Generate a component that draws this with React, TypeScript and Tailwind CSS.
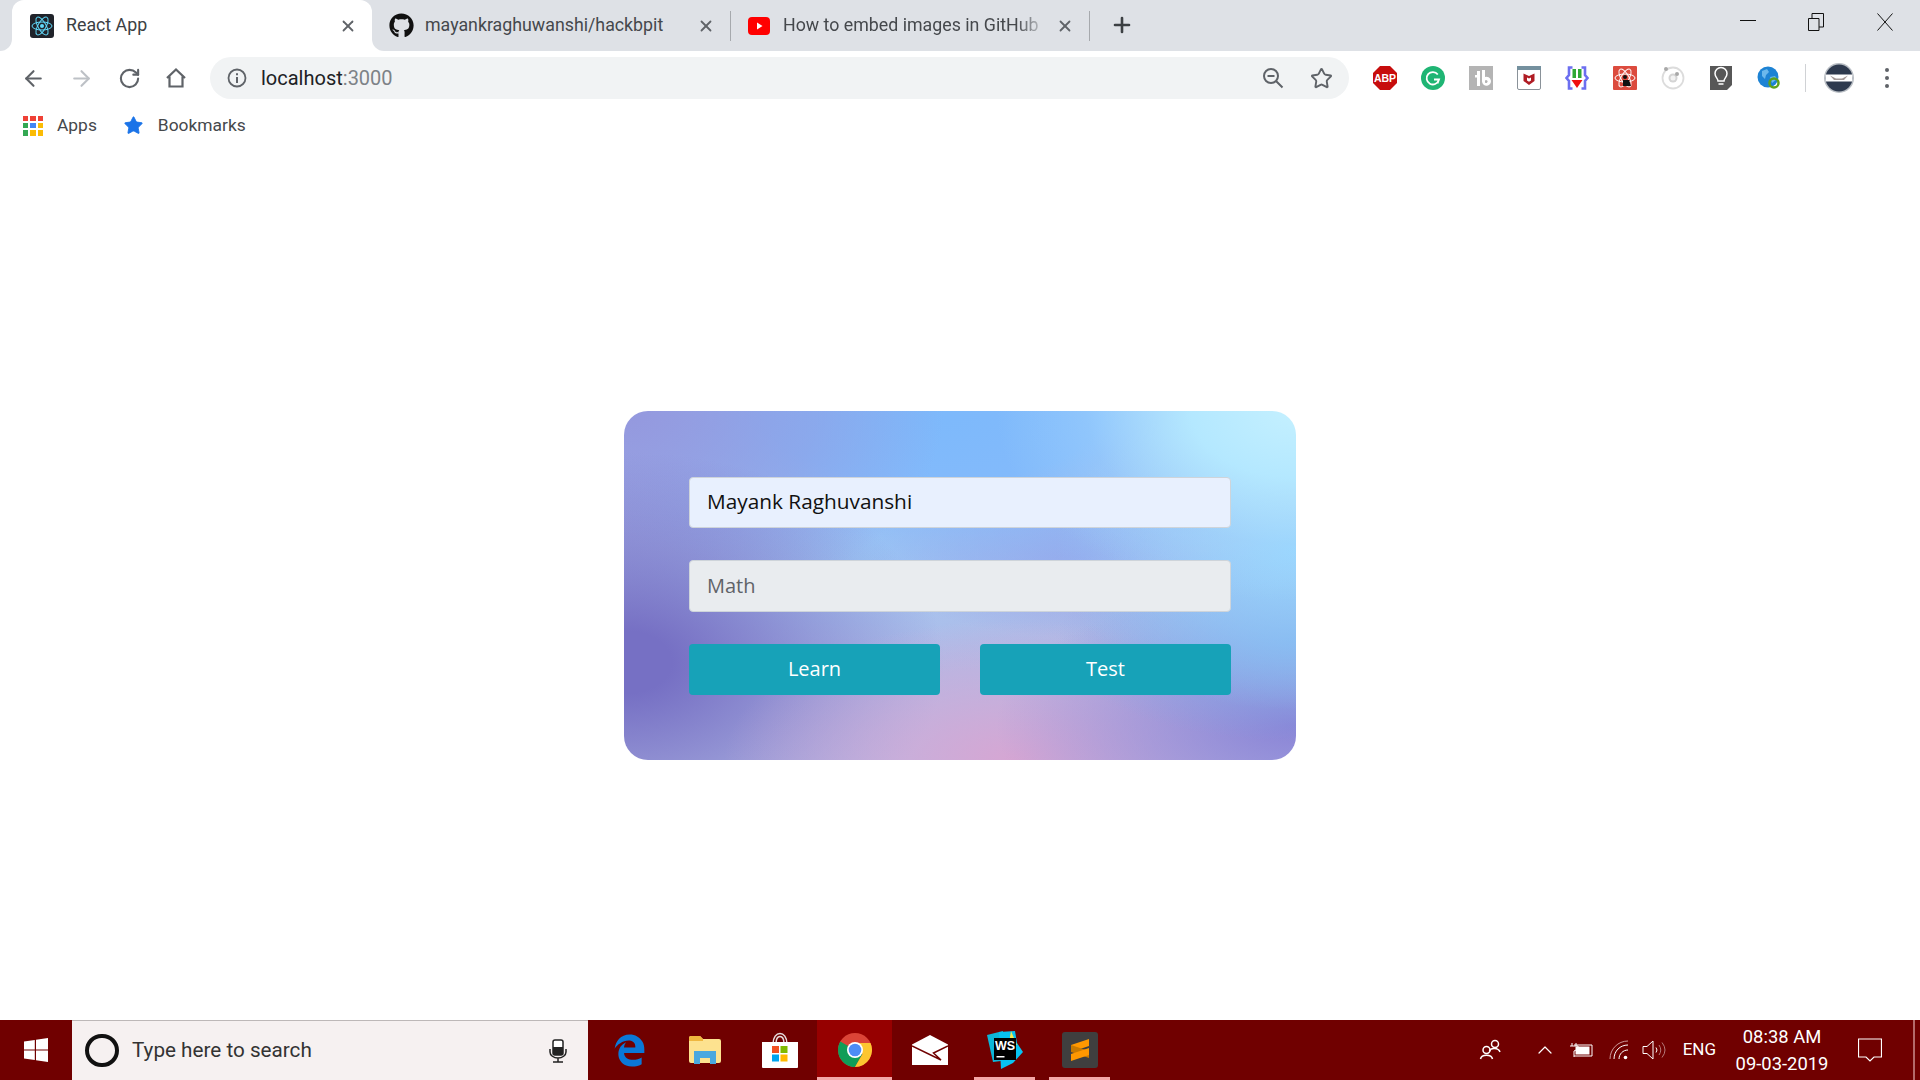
import { FaGithub } from "react-icons/fa";
import { FaEdgeLegacy } from "react-icons/fa6";
import { ArrowLeft, ArrowRight, RotateCw, Star, X, Plus, ChevronUp } from "lucide-react";

const ReactFavicon = () => (
  <svg width="24" height="24" viewBox="0 0 24 24" className="shrink-0">
    <rect width="24" height="24" rx="3" fill="#20232a" />
    <g fill="none" stroke="#61dafb" strokeWidth="1">
      <ellipse cx="12" cy="12" rx="10" ry="4" />
      <ellipse cx="12" cy="12" rx="10" ry="4" transform="rotate(60 12 12)" />
      <ellipse cx="12" cy="12" rx="10" ry="4" transform="rotate(120 12 12)" />
    </g>
    <circle cx="12" cy="12" r="2" fill="#61dafb" />
  </svg>
);

const YoutubeIcon = () => (
  <svg width="22" height="18" viewBox="0 0 22 18" className="shrink-0">
    <rect width="22" height="18" rx="4" fill="#f00" />
    <path d="M9 5.500v7l5.500-3.500z" fill="#fff" />
  </svg>
);

const Tab = ({ icon, title, active, fade, gap, width, pad }: { icon: React.ReactNode; title: string; active?: boolean; fade?: boolean; gap: string; width: string; pad: string }) => (
  <div className={`relative flex h-full shrink-0 items-center pr-[15px] ${width} ${pad} ${active ? "rounded-t-xl bg-white text-[#3c4043]" : "text-[#45484c]"}`}>
    {active && (
      <>
        <span className="absolute -left-3 bottom-0 h-3 w-3 bg-white">
          <span className="block h-3 w-3 rounded-br-xl bg-[#dee1e6]" />
        </span>
        <span className="absolute -right-3 bottom-0 h-3 w-3 bg-white">
          <span className="block h-3 w-3 rounded-bl-xl bg-[#dee1e6]" />
        </span>
      </>
    )}
    {icon}
    <span className={`${gap} flex-1 overflow-hidden whitespace-nowrap text-[17.8px] ${fade ? "[mask-image:linear-gradient(to_right,black_88%,transparent_100%)]" : ""}`}>{title}</span>
    <X size={18} strokeWidth={2.4} className="ml-2 shrink-0 text-[#5f6368]" />
  </div>
);

const WindowControls = () => (
  <div className="ml-auto flex h-full items-start">
    <svg width="16" height="16" viewBox="0 0 16 16" className="mr-[52px] mt-3">
      <path d="M0 8.500h16" stroke="#111" strokeWidth="1" />
    </svg>
    <svg width="16" height="18" viewBox="0 0 16 18" className="mr-[53px] mt-[13px]">
      <path d="M.5 5.500h10.500v12H.5zM4 5V.5h11.500V14H11" fill="none" stroke="#111" strokeWidth="1" />
    </svg>
    <svg width="16" height="18" viewBox="0 0 16 18" className="mr-[27px] mt-[13px]">
      <path d="M.5.5l15 17M15.500.5l-15 17" fill="none" stroke="#111" strokeWidth="1" />
    </svg>
  </div>
);

const HomeIcon = () => (
  <svg width="22" height="22" viewBox="0 0 22 22" fill="none" stroke="#5f6368" strokeWidth="2.200">
    <path d="M2 11 11 2.500 20 11M4.500 9.500V19.500h13V9.500" />
  </svg>
);

const InfoIcon = () => (
  <svg width="20" height="20" viewBox="0 0 20 20" fill="none">
    <circle cx="10" cy="10" r="8.500" stroke="#5f6368" strokeWidth="1.800" />
    <path d="M10 9v6M10 5.200v2" stroke="#5f6368" strokeWidth="2" />
  </svg>
);

const ZoomOutIcon = () => (
  <svg width="22" height="22" viewBox="0 0 22 22" fill="none" stroke="#5f6368" strokeWidth="2">
    <circle cx="9" cy="9" r="7" />
    <path d="M14 14l6.500 6.500M5.500 9h7" />
  </svg>
);

const Abp = () => (
  <svg width="24" height="24" viewBox="0 0 24 24">
    <path d="M7 0h10l7 7v10l-7 7H7l-7-7V7z" fill="#c70d0d" />
    <text x="12" y="16" textAnchor="middle" fontFamily="Liberation Sans, sans-serif" fontWeight="700" fontSize="10.500" fill="#fff">ABP</text>
  </svg>
);

const Grammarly = () => (
  <svg width="24" height="24" viewBox="0 0 24 24" fill="none">
    <circle cx="12" cy="12" r="12" fill="#1fb574" />
    <path d="M16.800 8.500A6.200 6.200 0 1 0 17.800 14M13 13.500h5l-1.500 4" stroke="#fff" strokeWidth="1.800" />
  </svg>
);

const Tb = () => (
  <svg width="24" height="24" viewBox="0 0 24 24">
    <rect width="24" height="24" fill="#b4b4b4" />
    <path d="M6 9h2V5h3v15H8V11.500H6zM13 4h3v7a4.500 4.500 0 1 1-3 4.500zM16 14.500v2a1.500 1.500 0 1 0 0-2" fill="#fff" />
  </svg>
);

const Mcafee = () => (
  <svg width="24" height="24" viewBox="0 0 24 24">
    <rect x=".5" y=".5" width="23" height="23" rx="1.500" fill="#fff" stroke="#8a9299" />
    <rect width="24" height="4" fill="#74909e" />
    <path d="M6.500 7.500l5.500 2.500 5.500-2.500v7.500L12 19l-5.500-4z" fill="#b01c24" />
    <path d="M10 11.500l2 1 2-1v3l-2 1.200-2-1.200z" fill="#fff" />
  </svg>
);

const Braces = () => (
  <svg width="24" height="24" viewBox="0 0 24 24" fill="none">
    <path d="M7.500 1.500H4v7.500L1.500 12 4 15v7.500h3.500M16.500 1.500H20v7.500l2.500 3-2.500 3v7.500h-3.500" stroke="#6c6ff0" strokeWidth="2.600" />
    <rect x="7.500" y="3" width="3.500" height="9" fill="#2fa835" />
    <rect x="13" y="3" width="3.500" height="9" fill="#2fa835" />
    <path d="M6.500 14h11l-5.500 8z" fill="#f01010" />
  </svg>
);

const AtomBug = () => (
  <svg width="24" height="24" viewBox="0 0 24 24" fill="none">
    <rect width="24" height="24" rx="1" fill="#dc4b3e" />
    <g stroke="#fff" strokeWidth="1">
      <ellipse cx="12" cy="12" rx="10" ry="4" />
      <ellipse cx="12" cy="12" rx="10" ry="4" transform="rotate(60 12 12)" />
      <ellipse cx="12" cy="12" rx="10" ry="4" transform="rotate(120 12 12)" />
    </g>
    <circle cx="12" cy="11" r="2" fill="#111" />
    <path d="M10 14h6l2 6h-8z" fill="#111" />
  </svg>
);

const Ionic = () => (
  <svg width="24" height="24" viewBox="0 0 24 24" fill="none">
    <circle cx="12" cy="12" r="10.500" stroke="#dcdcdc" strokeWidth="1.800" />
    <circle cx="12" cy="12" r="4.500" fill="#d4d4d4" />
    <circle cx="12" cy="12" r="2.500" fill="#f2f2f2" />
    <circle cx="5" cy="3" r="2" fill="#a8a8a8" />
    <circle cx="16" cy="8" r="2" fill="#a8a8a8" />
  </svg>
);

const Bulb = () => (
  <svg width="24" height="24" viewBox="0 0 24 24" fill="none">
    <path d="M1 0h22v19l-5 5H1z" fill="#575757" />
    <path d="M9 15c0-3-3-3.500-3-7.500a6 6 0 0 1 12 0c0 4-3 4.500-3 7.500zM9.500 18h5" stroke="#fff" strokeWidth="1.500" />
  </svg>
);

const Globe = () => (
  <svg width="24" height="24" viewBox="0 0 24 24" fill="none">
    <circle cx="11" cy="11" r="10.500" fill="#1d83d4" />
    <path d="M5 5l5-2 2 3-3 3-1 4-3-3zM13 11l5-1 2 3-5 4z" fill="#6bb8ec" />
    <circle cx="17" cy="17" r="4.500" stroke="#5ea11b" strokeWidth="2.500" />
  </svg>
);

const Avatar = () => (
  <svg width="30" height="30" viewBox="0 0 30 30">
    <circle cx="15" cy="15" r="15" fill="#b9bec4" />
    <circle cx="15" cy="15" r="13.500" fill="#2e3a4e" />
    <path d="M1.500 11.500h27v7h-27z" fill="#fff" />
    <path d="M6 12.500l6 3h6l6-3-4 4.500H10z" fill="#a49a98" />
  </svg>
);

const AppsGrid = () => {
  const colors = ["#ef4136", "#ef4136", "#ef4136", "#34a853", "#4285f4", "#fbbc05", "#34a853", "#fbbc05", "#fbbc05"];
  return (
    <div className="grid h-5 w-5 grid-cols-3 gap-[2px]">
      {colors.map((c, i) => (
        <span key={i} style={{ backgroundColor: c }} />
      ))}
    </div>
  );
};

const Extensions = () => (
  <div className="ml-6 flex items-center gap-6">
    <Abp />
    <Grammarly />
    <Tb />
    <Mcafee />
    <Braces />
    <AtomBug />
    <Ionic />
    <Bulb />
    <Globe />
  </div>
);

const WinLogo = () => (
  <svg width="24" height="24" viewBox="0 0 24 24" fill="#fff">
    <path d="M0 3.500 10.800 2v9.500H0zM12 1.800 24 0v11.500H12zM0 12.500h10.800V22L0 20.500zM12 12.500h12V24l-12-1.800z" />
  </svg>
);

const MicIcon = () => (
  <svg width="18" height="24" viewBox="0 0 18 24" fill="none">
    <rect x="4" y="1" width="10" height="15" rx="2" fill="#fff" stroke="#222" strokeWidth="1.500" />
    <rect x="4" y="8" width="10" height="8" fill="#222" />
    <path d="M1 10v3a8 6 0 0 0 16 0v-3M9 19v4M4 23h10" stroke="#222" strokeWidth="1.500" />
  </svg>
);

const FolderIcon = () => (
  <svg width="32" height="28" viewBox="0 0 32 28">
    <path d="M0 2q0-2 2-2h9l3 3h16q2 0 2 2v20q0 2-2 2H2q-2 0-2-2z" fill="#fde28f" />
    <path d="M0 2q0-2 2-2h9l3 3v2H0z" fill="#efb73f" />
    <path d="M5 28V15h22v13h-6v-6H11v6z" fill="#4aa8df" />
  </svg>
);

const StoreIcon = () => (
  <svg width="36" height="36" viewBox="0 0 36 36" fill="none">
    <path d="M11 12c0-14 14-14 14 0M14 12c0-10 8-10 8 0" stroke="#e8dede" strokeWidth="1.500" />
    <path d="M0 10h36v25q0 1-1 1H1q-1 0-1-1z" fill="#fff" />
    <rect x="10" y="14" width="7" height="7" fill="#f25022" />
    <rect x="18.500" y="14" width="7" height="7" fill="#7fba00" />
    <rect x="10" y="22.500" width="7" height="7" fill="#00a4ef" />
    <rect x="18.500" y="22.500" width="7" height="7" fill="#ffb900" />
  </svg>
);

const ChromeIcon = () => (
  <svg width="34" height="34" viewBox="0 0 34 34">
    <circle cx="17" cy="17" r="17" fill="#db4437" />
    <path d="M17 17 2.300 8.500A17 17 0 0 0 17 34l7.500-13z" fill="#0f9d58" />
    <path d="M17 10h15.500A17 17 0 0 1 17 34l7.500-13z" fill="#fdc630" />
    <circle cx="17" cy="17" r="8" fill="#fff" />
    <circle cx="17" cy="17" r="6.300" fill="#4d8cf5" />
  </svg>
);

const MailIcon = () => (
  <svg width="36" height="30" viewBox="0 0 36 30">
    <path d="M18 0 36 9.500V30H0V9.500z" fill="#fff" />
    <path d="M0 11 29 25 21.500 18 36 11" fill="none" stroke="#700000" strokeWidth="1.500" />
  </svg>
);

const WebStormIcon = () => (
  <svg width="36" height="38" viewBox="0 0 36 38">
    <path d="M0 4 16 0l-2 30-8 1z" fill="#0cb6d8" />
    <path d="M12 1 28 0l2 12 6 9-10 11-12 6z" fill="#07c3f2" />
    <path d="M24 0l6 14-8-2z" fill="#f7e94e" />
    <rect x="7" y="7" width="22" height="22" fill="#000" />
    <text x="18" y="19" textAnchor="middle" fontFamily="Liberation Sans, sans-serif" fontWeight="700" fontSize="12.500" fill="#fff">WS</text>
    <rect x="9.500" y="25" width="8" height="1.500" fill="#fff" />
  </svg>
);

const SublimeIcon = () => (
  <svg width="36" height="36" viewBox="0 0 36 36">
    <rect width="36" height="36" rx="3" fill="#3f3f3f" />
    <path d="M9 13 27 7v7L9 20z" fill="#ff9800" />
    <path d="M9 13l18 6v7L9 20z" fill="#c97a00" />
    <path d="M9 22 27 16v7L9 29z" fill="#ff9800" />
  </svg>
);

const TaskItem = ({ children, underline, active }: { children: React.ReactNode; underline?: boolean; active?: boolean }) => (
  <div className={`relative flex h-full w-[75px] items-center justify-center ${active ? "bg-[#960000]" : ""}`}>
    {children}
    {underline && <span className={`absolute bottom-0 h-[3px] bg-[#f4a7a7] ${active ? "left-0 right-0" : "left-[7px] right-[7px]"}`} />}
  </div>
);

const PeopleIcon = () => (
  <svg width="24" height="24" viewBox="0 0 24 24" fill="none" stroke="#fff" strokeWidth="1.500">
    <circle cx="16" cy="6" r="3.500" />
    <path d="M10.500 13c1-3.500 9-3.500 10.500 1" />
    <circle cx="7.500" cy="12" r="3.500" />
    <path d="M1.500 21c1-5 11-5 12 0" />
  </svg>
);

const BatteryIcon = () => (
  <svg width="24" height="16" viewBox="0 0 24 16" fill="none" stroke="#fff" strokeWidth="1">
    <path d="M3 1v3M7 1v3M1 4h8v3L5 9M5 9v6M5 3h18v11H5" />
    <rect x="7" y="5" width="13" height="7" fill="#fff" />
  </svg>
);

const WifiIcon = () => (
  <svg width="20" height="20" viewBox="0 0 20 20" fill="none">
    <path d="M1 19C1 9 9 1 19 1" stroke="#c99" strokeWidth="1" />
    <path d="M5 19C5 11 11 5 19 5" stroke="#fff" strokeWidth="1" />
    <path d="M10 19c0-5 4-9 9-9" stroke="#fff" strokeWidth="1" />
    <circle cx="16.500" cy="17.500" r="1.800" fill="#fff" />
  </svg>
);

const VolumeIcon = () => (
  <svg width="24" height="20" viewBox="0 0 24 20" fill="none" stroke="#fff" strokeWidth="1">
    <path d="M1 6.500h4L11 1v18l-6-5.500H1z" />
    <path d="M14 7.500q2 2.500 0 5" />
    <path d="M17 5q3.500 5 0 10M20 2.500q6 7.500 0 15" stroke="#b47a7a" />
  </svg>
);

const ActionCenterIcon = () => (
  <svg width="24" height="24" viewBox="0 0 24 24" fill="none" stroke="#fff" strokeWidth="1.200">
    <path d="M.5 1h23v18H16l-4 4-4-4H.5z" />
  </svg>
);

const Card = () => (
  <div className="h-[349px] w-[672px] rounded-3xl bg-[radial-gradient(300px_190px_at_100%_0%,#c4f0ff_0%,#b4e8ff_35%,rgba(170,220,255,0.35)_70%,transparent_100%),radial-gradient(240px_160px_at_100%_40%,#95d4fd_0%,rgba(149,212,253,0.5)_55%,transparent_100%),radial-gradient(240px_100px_at_100%_66%,#7fa8e8_0%,rgba(127,168,232,0.45)_55%,transparent_100%),radial-gradient(300px_140px_at_100%_90%,#8a84d6_0%,rgba(138,132,214,0.45)_55%,transparent_100%),radial-gradient(290px_140px_at_58%_100%,#d6a6d3_0%,rgba(214,166,211,0.45)_55%,transparent_100%),radial-gradient(320px_210px_at_0%_72%,#7670c4_0%,#7670c4_15%,rgba(118,112,196,0.45)_60%,transparent_100%),radial-gradient(320px_210px_at_0%_0%,#9498de_0%,rgba(148,152,222,0.5)_60%,transparent_100%),radial-gradient(420px_180px_at_46%_0%,#7db9fb_0%,#82bafb_40%,rgba(130,186,251,0.4)_72%,transparent_100%),radial-gradient(210px_80px_at_68%_42%,#98a8ea_0%,rgba(152,168,234,0.5)_55%,transparent_100%),radial-gradient(300px_120px_at_35%_42%,#a4c8f2_0%,rgba(164,200,242,0.5)_55%,transparent_100%),linear-gradient(#a8b4e6,#b4bce6)] px-[65px] pb-[65px] pt-[66px]">
    <div className="flex h-[51px] items-center rounded border border-[#ced4da] bg-[#e8f0fe] px-[17px] font-['Open_Sans',sans-serif] text-[20.8px] text-[#111]">Mayank Raghuvanshi</div>
    <div className="mt-8 flex h-[52px] items-center rounded border border-[#ced4da] bg-[#e9ecef] px-[17px] font-['Open_Sans',sans-serif] text-[20px] text-[#5f6368]">Math</div>
    <div className="mt-8 flex gap-10">
      <button className="h-[51px] flex-1 rounded bg-[#17a2b8] font-['Open_Sans',sans-serif] text-[20px] text-white">Learn</button>
      <button className="h-[51px] flex-1 rounded bg-[#17a2b8] font-['Open_Sans',sans-serif] text-[20px] text-white">Test</button>
    </div>
  </div>
);

export default function App() {
  return (
    <div className="flex h-screen w-full flex-col overflow-hidden bg-white font-['Roboto',sans-serif]">
      <div className="flex h-[51px] shrink-0 items-center bg-[#dee1e6] pl-3">
        <div className="flex h-full">
          <Tab active width="w-[360px]" pad="pl-[18px]" icon={<ReactFavicon />} title="React App" gap="ml-3" />
          <Tab width="w-[358px]" pad="pl-[17px]" icon={<FaGithub size={25} className="shrink-0 text-[#111]" />} title="mayankraghuwanshi/hackbpit" gap="ml-[11px]" />
        </div>
        <span className="h-[30px] w-px shrink-0 bg-[#a6a9ad]" />
        <div className="h-full">
          <Tab fade width="w-[358px]" pad="pl-[17px]" icon={<YoutubeIcon />} title="How to embed images in GitHub" gap="ml-[13px]" />
        </div>
        <span className="h-[30px] w-px shrink-0 bg-[#a6a9ad]" />
        <Plus size={24} strokeWidth={2.6} className="mb-[2px] ml-[20px] shrink-0 text-[#3c4043]" />
        <WindowControls />
      </div>

      <div className="flex h-[54px] shrink-0 items-center pl-[21px] pr-[29px]">
        <ArrowLeft size={25} strokeWidth={2} className="text-[#5f6368]" />
        <ArrowRight size={25} strokeWidth={2} className="ml-[23px] text-[#bdc1c6]" />
        <RotateCw size={23} strokeWidth={2.2} className="ml-[24px] text-[#5f6368]" />
        <span className="ml-[24px]"><HomeIcon /></span>
        <div className="ml-[23px] flex h-[42px] w-[1139px] items-center rounded-full bg-[#f1f3f4] pl-[17px] pr-[16px]">
          <InfoIcon />
          <span className="ml-[14px] text-[20px] text-[#202124]">localhost<span className="text-[#7d8287]">:3000</span></span>
          <span className="ml-auto"><ZoomOutIcon /></span>
          <Star size={23} strokeWidth={2} className="ml-[26px] text-[#5f6368]" />
        </div>
        <Extensions />
        <span className="ml-[24px] h-7 w-px bg-[#d0d2d5]" />
        <span className="ml-[18px]"><Avatar /></span>
        <span className="ml-[31px] flex flex-col gap-[4px]">
          <span className="h-1 w-1 rounded-full bg-[#5f6368]" />
          <span className="h-1 w-1 rounded-full bg-[#5f6368]" />
          <span className="h-1 w-1 rounded-full bg-[#5f6368]" />
        </span>
      </div>

      <div className="flex h-[45px] shrink-0 items-center pb-[4px] pl-[23px] text-[17.4px] text-[#45484c]">
        <AppsGrid />
        <span className="ml-[14px]">Apps</span>
        <Star size={21} fill="#1a73e8" strokeWidth={1} className="ml-[26px] text-[#1a73e8]" />
        <span className="ml-[14px]">Bookmarks</span>
      </div>

      <main className="flex flex-1 items-center justify-center">
        <Card />
      </main>

      <div className="flex h-[60px] shrink-0 items-center bg-[#700000]">
        <div className="flex w-[72px] justify-center"><WinLogo /></div>
        <div className="flex h-full w-[516px] items-center border-t border-[#bdb8b8] bg-[#f6f1f1] pl-[13px] pr-[21px]">
          <span className="h-[33px] w-[34px] rounded-full border-[4px] border-[#111]" />
          <span className="ml-[13px] text-[20.7px] text-[#333]">Type here to search</span>
          <span className="ml-auto"><MicIcon /></span>
        </div>
        <div className="ml-1 flex h-full">
          <TaskItem><FaEdgeLegacy size={33} className="text-[#0a78d7]" /></TaskItem>
          <TaskItem><FolderIcon /></TaskItem>
          <TaskItem><StoreIcon /></TaskItem>
          <TaskItem active underline><ChromeIcon /></TaskItem>
          <TaskItem><MailIcon /></TaskItem>
          <TaskItem underline><WebStormIcon /></TaskItem>
          <TaskItem underline><SublimeIcon /></TaskItem>
        </div>
        <div className="ml-auto flex h-full items-center pr-[5px] text-white">
          <PeopleIcon />
          <ChevronUp size={24} strokeWidth={1.2} className="ml-[30px]" />
          <span className="ml-[12px]"><BatteryIcon /></span>
          <span className="ml-[16px]"><WifiIcon /></span>
          <span className="ml-[13px]"><VolumeIcon /></span>
          <span className="ml-[17px] text-[17px]">ENG</span>
          <div className="ml-[16px] flex w-[100px] flex-col items-center gap-[3px] text-[18.4px] leading-6">
            <span>08:38 AM</span>
            <span>09-03-2019</span>
          </div>
          <span className="ml-[26px]"><ActionCenterIcon /></span>
          <span className="ml-[31px] h-full w-[2px] bg-[#b56a6a]" />
        </div>
      </div>
    </div>
  );
}
